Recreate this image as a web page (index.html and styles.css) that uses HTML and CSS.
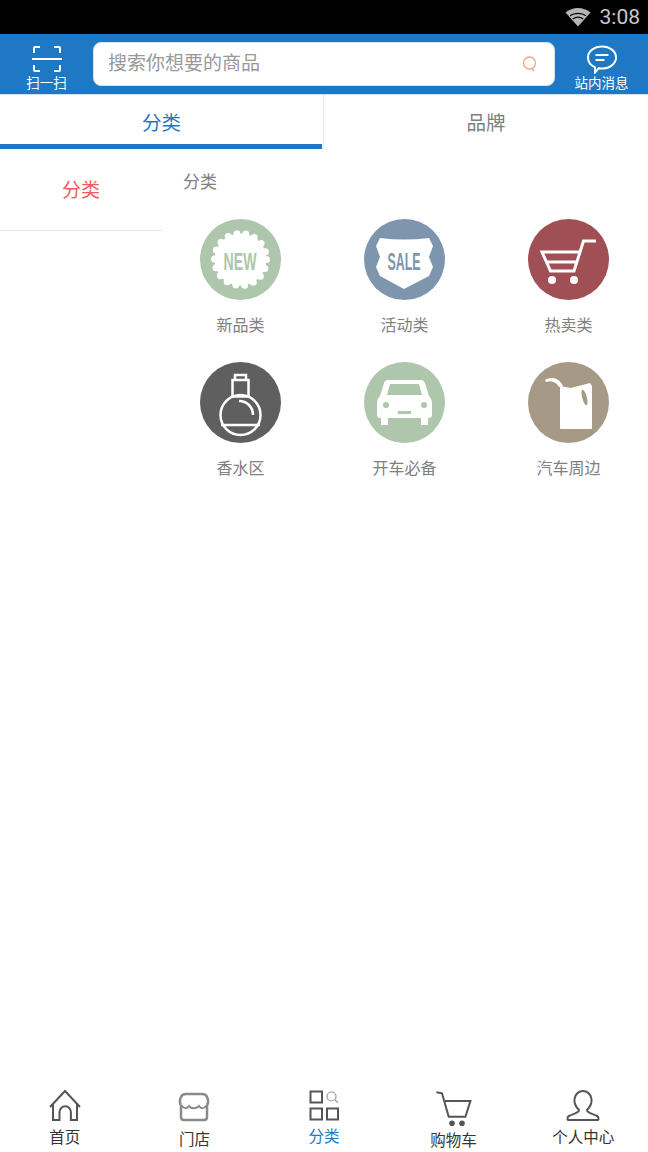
FILE: index.html
```html
<!DOCTYPE html>
<html lang="zh">
<head>
    <meta charset="UTF-8">
    <meta name="viewport" content="width=device-width, initial-scale=1.0">
    <title>分类</title>
    <link rel="stylesheet" href="styles.css">
</head>
<body>
    <div class="status-bar">
        <svg class="wifi" width="26" height="20" viewBox="0 0 26 20">
            <path d="M13 19.500 0.500 5.500C7.500-0.500 18.500-0.500 25.500 5.500Z" fill="#b5b5b5"/>
            <path d="M5 8.800C9.500 5.500 16.500 5.500 21 8.800M7.800 12C11 9.800 15 9.800 18.200 12" fill="none" stroke="#000" stroke-width="1.200"/>
        </svg>
        <span class="clock">3:08</span>
    </div>

    <header class="top-bar">
        <div class="top-action">
            <svg width="30" height="29" viewBox="0 0 30 29" fill="none" stroke="#fff" stroke-width="2">
                <path d="M2 8V3C2 2 3 2 3 2H8M22 2H27C28 2 28 3 28 3V8M0 14H30M2 20V25C2 26 3 26 3 26H8M22 26H27C28 26 28 25 28 25V20"/>
            </svg>
            <span>扫一扫</span>
        </div>
        <div class="search-box">
            <span class="search-text">搜索你想要的商品</span>
            <svg width="15" height="16" viewBox="0 0 15 16" fill="none" stroke="#eda58a" stroke-width="1.300">
                <circle cx="7.500" cy="7" r="6"/>
                <path d="M10 12.500 12 15"/>
            </svg>
        </div>
        <div class="top-action">
            <svg width="32" height="29" viewBox="0 0 32 29" fill="none" stroke="#fff" stroke-width="2">
                <path d="M9 22.300C4.500 20.300 2 16.800 2 12.500 2 6.200 8.200 1.500 16 1.500S30 6.200 30 12.500 23.800 23.500 16 23.500C14.800 23.500 13.800 23.400 12.800 23.200L9 27.500Z"/>
                <path d="M9.500 10H22.500M9.500 15H18.500"/>
            </svg>
            <span>站内消息</span>
        </div>
    </header>

    <nav class="tabs">
        <div class="tab tab-active">分类</div>
        <div class="tab">品牌</div>
    </nav>

    <main class="content">
        <aside class="side-menu">
            <div class="side-item">分类</div>
        </aside>
        <section class="cat-panel">
            <h2 class="cat-title">分类</h2>
            <div class="cat-grid">
                <div class="cat-item">
                    <svg class="cat-icon" viewBox="0 0 81 81">
                        <circle cx="40.500" cy="40.500" r="40.500" fill="#aec6ab"/>
                        <circle cx="40.500" cy="40.500" r="26" fill="#fff"/>
                        <circle cx="40.500" cy="40.500" r="26" fill="none" stroke="#fff" stroke-width="7" stroke-linecap="round" stroke-dasharray="0 9.080"/>
                        <text class="badge-text" transform="translate(23.500 50.500) scale(0.615 1)" font-size="23" fill="#aec6ab">NEW</text>
                    </svg>
                    <span>新品类</span>
                </div>
                <div class="cat-item">
                    <svg class="cat-icon" viewBox="0 0 81 81">
                        <circle cx="40.500" cy="40.500" r="40.500" fill="#7e95ae"/>
                        <path d="M16 19Q40 22 65 19L69 27 65 38 69 48 65 57 40 70 16 57 12 48 16 38 12 27Z" fill="#fff"/>
                        <text class="badge-text" transform="translate(23.500 50.500) scale(0.54 1)" font-size="23" fill="#7e95ae">SALE</text>
                    </svg>
                    <span>活动类</span>
                </div>
                <div class="cat-item">
                    <svg class="cat-icon" viewBox="0 0 81 81">
                        <circle cx="40.500" cy="40.500" r="40.500" fill="#a05055"/>
                        <path d="M68 22H55.500L46 52H22.500L14 33H52M17.500 43H49" fill="none" stroke="#fff" stroke-width="3"/>
                        <circle cx="24" cy="61" r="4" fill="#fff"/>
                        <circle cx="46" cy="61" r="4" fill="#fff"/>
                    </svg>
                    <span>热卖类</span>
                </div>
                <div class="cat-item">
                    <svg class="cat-icon" viewBox="0 0 81 81">
                        <circle cx="40.500" cy="40.500" r="40.500" fill="#5f5f5f"/>
                        <g fill="none" stroke="#fff" stroke-width="2.500">
                            <path d="M35 18V13H46V18M32.500 18H48.500V34.500H32.500Z"/>
                            <circle cx="40.500" cy="53" r="20"/>
                            <path d="M39 39C47 39 53 45 53 53M21 63H60"/>
                        </g>
                    </svg>
                    <span>香水区</span>
                </div>
                <div class="cat-item">
                    <svg class="cat-icon" viewBox="0 0 81 81">
                        <circle cx="40.500" cy="40.500" r="40.500" fill="#aec6ab"/>
                        <path d="M24 18H57C59 18 60 19 61 21L65 34C67 36 68 38 68 41V53C68 55 67 56 65 56H64V63H57V56H24V63H17V56H16C14 56 13 55 13 53V41C13 38 14 36 16 34L20 21C21 19 22 18 24 18Z" fill="#fff"/>
                        <path d="M26 22H55L58 33H23Z" fill="#aec6ab"/>
                        <circle cx="22" cy="43" r="3" fill="#aec6ab"/>
                        <circle cx="60" cy="43" r="3" fill="#aec6ab"/>
                        <rect x="34" y="49" width="13" height="3" fill="#aec6ab"/>
                    </svg>
                    <span>开车必备</span>
                </div>
                <div class="cat-item">
                    <svg class="cat-icon" viewBox="0 0 81 81">
                        <circle cx="40.500" cy="40.500" r="40.500" fill="#a69a87"/>
                        <path d="M32 24 43 26 62 21 64 24V66C64 67 63 67 62 67H34C33 67 32 67 32 66Z" fill="#fff"/>
                        <path d="M17 18C24 14 31 16 35 24L31 25C28 20 24 18 18 20Z" fill="#fff"/>
                        <ellipse cx="56.500" cy="35.500" rx="2.300" ry="8" transform="rotate(-15 56.500 35.500)" fill="#a69a87"/>
                    </svg>
                    <span>汽车周边</span>
                </div>
            </div>
        </section>
    </main>

    <footer class="bottom-nav">
        <div class="nav-item">
            <svg class="nav-icon" viewBox="0 0 40 40" fill="none" stroke="#555" stroke-width="2">
                <path d="M5 19 20 3 35 19M8 16V32H14.500V24A5.700 5.700 0 0 1 25.900 24V32H32V16"/>
            </svg>
            <span>首页</span>
        </div>
        <div class="nav-item nav-store">
            <svg class="nav-icon" viewBox="0 0 40 40" fill="none" stroke="#8a8a8a" stroke-width="2.500">
                <path d="M7 17C5 14 6 11 7 9 8 6 10 6 12 6H28C30 6 32 6 33 9 34 11 35 14 33 17"/>
                <path d="M7 17V29C7 31 8 32 10 32H30C32 32 33 31 33 29V17"/>
                <path d="M7 17C10 21 13 21 15 18 17 21 22 21 25 18 27 21 30 21 33 17" stroke-width="2"/>
            </svg>
            <span>门店</span>
        </div>
        <div class="nav-item nav-current">
            <svg class="nav-icon" viewBox="0 0 40 40" fill="none" stroke="#555" stroke-width="2">
                <rect x="6.500" y="3.500" width="11.500" height="11"/>
                <rect x="6.500" y="20.500" width="11.500" height="11"/>
                <rect x="23" y="20.500" width="11" height="11"/>
                <circle cx="27.500" cy="8.500" r="4.500" stroke="#999" stroke-width="1.200"/>
                <path d="M31 12 34 14.500" stroke="#999" stroke-width="1.200"/>
            </svg>
            <span>分类</span>
        </div>
        <div class="nav-item nav-cart">
            <svg class="nav-icon" viewBox="0 0 40 40" fill="none" stroke="#555" stroke-width="2">
                <path d="M2.400 4.300 8 5.300 14.700 28.700H31.400L36.400 13H9.700"/>
                <circle cx="18" cy="35.300" r="2.800" fill="#555" stroke="none"/>
                <circle cx="28" cy="35.300" r="2.800" fill="#555" stroke="none"/>
            </svg>
            <span>购物车</span>
        </div>
        <div class="nav-item">
            <svg class="nav-icon" viewBox="0 0 40 40" fill="none" stroke="#555" stroke-width="2">
                <path d="M6 32H34C36 32 36 29 34 28 30 26 24 25 24 22 27 19 29 15 28.500 11 28 6 24 3 20 3S12 6 11.500 11C11 15 13 19 16 22 16 25 10 26 6 28 4 29 4 32 6 32Z"/>
            </svg>
            <span>个人中心</span>
        </div>
    </footer>
</body>
</html>
```

FILE: styles.css
```css
* {
    margin: 0;
    padding: 0;
    box-sizing: border-box;
}

body {
    font-family: "Noto Sans CJK SC", "Liberation Sans", sans-serif;
    background: #fff;
    width: 648px;
    height: 1152px;
    display: flex;
    flex-direction: column;
    overflow: hidden;
}

.status-bar {
    height: 34px;
    background: #000;
    display: flex;
    align-items: center;
    justify-content: flex-end;
    gap: 9px;
    padding-right: 8px;
}

.clock {
    font-family: Roboto, sans-serif;
    font-size: 21px;
    color: #c8c8c8;
}

.top-bar {
    height: 61px;
    background: #1f78c4;
    border-bottom: 1px solid #cfe2f3;
    display: flex;
    align-items: center;
}

.top-action {
    width: 93px;
    height: 100%;
    padding-top: 11px;
    display: flex;
    flex-direction: column;
    align-items: center;
    color: #fff;
    font-size: 13.500px;
    line-height: 16px;
}

.search-box {
    flex: 1;
    height: 44px;
    margin-bottom: 1px;
    background: #fff;
    border: 1px solid #d5e4f2;
    border-radius: 8px;
    display: flex;
    align-items: center;
    justify-content: space-between;
    padding: 0 17px 0 14px;
}

.search-text {
    font-size: 19px;
    line-height: 24px;
    padding-bottom: 3px;
    color: #999;
}

.tabs {
    height: 54px;
    display: grid;
    grid-template-columns: 324px 324px;
}

.tab {
    display: flex;
    align-items: center;
    justify-content: center;
    font-size: 19.500px;
    color: #808080;
    padding-bottom: 1px;
}

.tab-active {
    color: #1f78c4;
    border-right: 1px solid #e8e8e8;
    position: relative;
}

.tab-active::after {
    content: "";
    position: absolute;
    left: 0;
    right: 1px;
    bottom: 0;
    height: 5px;
    background: #1f78c4;
}

.content {
    flex: 1;
    display: flex;
}

.side-menu {
    width: 162px;
}

.side-item {
    height: 82px;
    padding-bottom: 2px;
    border-bottom: 1px solid #e8e8e8;
    display: flex;
    align-items: center;
    justify-content: center;
    font-size: 19px;
    color: #f4595e;
}

.cat-panel {
    flex: 1;
    padding-top: 19px;
}

.cat-title {
    font-size: 17px;
    font-weight: normal;
    line-height: 26px;
    color: #808080;
    padding-left: 21px;
}

.cat-grid {
    margin-top: 25px;
    padding-left: 38px;
    display: grid;
    grid-template-columns: repeat(3, 81px);
    column-gap: 83px;
    row-gap: 26px;
}

.cat-item {
    display: flex;
    flex-direction: column;
    align-items: center;
    font-size: 16px;
    line-height: 24px;
    color: #808080;
    gap: 12px;
}

.cat-icon {
    width: 81px;
    height: 81px;
    display: block;
}

.badge-text {
    font-family: "Liberation Sans", sans-serif;
    font-weight: bold;
}

.bottom-nav {
    height: 72px;
    padding-top: 8px;
    display: grid;
    grid-template-columns: repeat(5, 1fr);
}

.nav-item {
    display: flex;
    flex-direction: column;
    align-items: center;
    font-size: 15.500px;
    line-height: 18px;
    color: #333;
}

.nav-icon {
    width: 40px;
    height: 40px;
    display: block;
    margin-bottom: -1px;
}

.nav-store span {
    margin-top: 2px;
}

.nav-current span {
    margin-top: -1px;
    color: #1f78c4;
}

.nav-cart span {
    margin-top: 3px;
}
```
